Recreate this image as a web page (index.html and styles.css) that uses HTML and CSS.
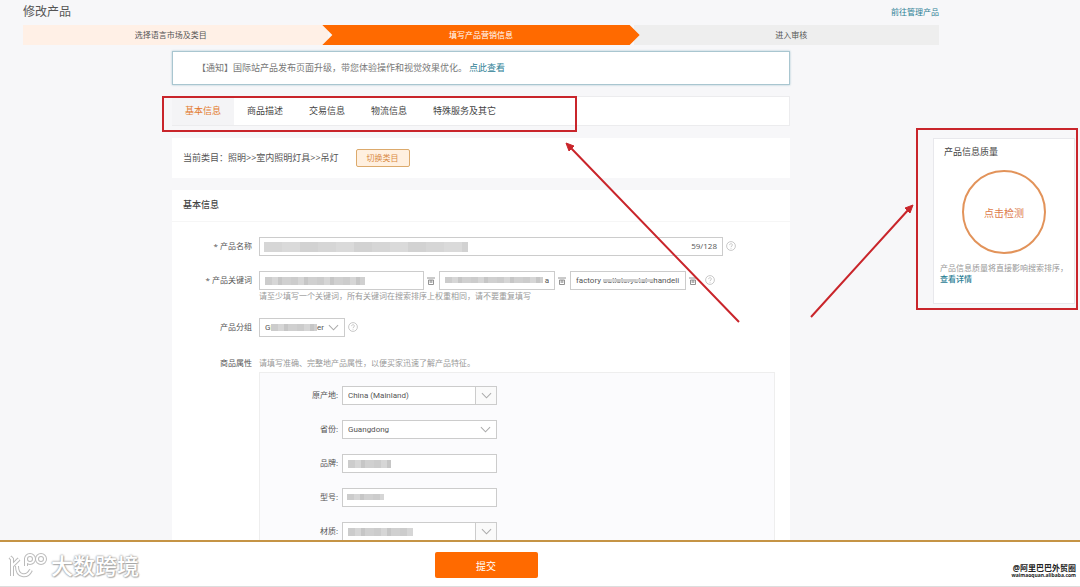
FILE: index.html
```html
<!DOCTYPE html>
<html lang="zh-CN">
<head>
  <meta charset="UTF-8">
  <meta name="viewport" content="width=device-width, initial-scale=1.0">
  <title>修改产品</title>
  <link rel="stylesheet" href="styles.css">
</head>
<body>
  <!-- Shared icons -->
  <svg class="icon-defs" aria-hidden="true">
    <symbol id="icon-help" viewBox="0 0 10 10">
      <circle cx="5" cy="5" r="4.4" fill="none" stroke="currentColor" stroke-width="0.8"/>
      <path d="M3.6 4.1c0-1.9 2.9-1.8 2.8-.1 0 1-1.4 1-1.4 2.1M5 6.9v.8" fill="none" stroke="currentColor" stroke-width="0.8"/>
    </symbol>
    <symbol id="icon-trash" viewBox="0 0 8 8">
      <path d="M0 1h8M1.5 3v4.5h5V3M1.5 3h5M3.2 3v3M4.8 3v3" fill="none" stroke="currentColor" stroke-width="0.9"/>
    </symbol>
    <symbol id="icon-down" viewBox="0 0 12 7">
      <path d="M1 1l5 5 5-5" fill="none" stroke="currentColor" stroke-width="1.1"/>
    </symbol>
  </svg>

  <div class="page">
    <header class="header">
      <div class="header-top">
        <h1>修改产品</h1>
        <a href="#">前往管理产品</a>
      </div>
      <ol class="steps">
        <li class="step done">选择语言市场及类目</li>
        <li class="step current">填写产品营销信息</li>
        <li class="step next">进入审核</li>
      </ol>
    </header>

    <div class="content">
      <main class="main">
        <div class="notice">【通知】国际站产品发布页面升级，带您体验操作和视觉效果优化。<a href="#">点此查看</a></div>

        <nav class="tabs">
          <a class="tab active" href="#">基本信息</a>
          <a class="tab" href="#">商品描述</a>
          <a class="tab" href="#">交易信息</a>
          <a class="tab" href="#">物流信息</a>
          <a class="tab" href="#">特殊服务及其它</a>
        </nav>

        <div class="category">
          <span>当前类目：照明&gt;&gt;室内照明灯具&gt;&gt;吊灯</span>
          <button type="button" class="switch-button">切换类目</button>
        </div>

        <form class="card" id="productForm">
          <h2>基本信息</h2>

          <div class="row">
            <label class="row-label" for="name"><b>*</b> 产品名称</label>
            <div class="field name-field">
              <input id="name" type="text">
              <span class="mask mask-name"></span>
              <span class="count">59/128</span>
            </div>
            <svg class="help"><use href="#icon-help"/></svg>
          </div>

          <div class="row">
            <label class="row-label" for="keyword1"><b>*</b> 产品关键词</label>
            <div class="row-body">
              <div class="keywords">
                <div class="field keyword-first">
                  <input id="keyword1" type="text">
                  <span class="mask mask-keyword1"></span>
                </div>
                <svg class="trash"><use href="#icon-trash"/></svg>
                <div class="field keyword">
                  <input class="align-right" type="text" value="a" aria-label="产品关键词 2">
                  <span class="mask mask-keyword2"></span>
                </div>
                <svg class="trash"><use href="#icon-trash"/></svg>
                <div class="field keyword">
                  <input type="text" value="factory outletcrystal chandeli" aria-label="产品关键词 3">
                  <span class="mask mask-keyword3"></span>
                </div>
                <svg class="trash"><use href="#icon-trash"/></svg>
                <svg class="help"><use href="#icon-help"/></svg>
              </div>
              <p class="hint">请至少填写一个关键词，所有关键词在搜索排序上权重相同，请不要重复填写</p>
            </div>
          </div>

          <div class="row row-group">
            <label class="row-label" for="group">产品分组</label>
            <div class="field group-field">
              <select id="group"><option>Glass chandelier</option></select>
              <span class="mask mask-group"></span>
              <span class="arrow"><svg><use href="#icon-down"/></svg></span>
            </div>
            <svg class="help"><use href="#icon-help"/></svg>
          </div>

          <div class="row row-attributes">
            <span class="row-label">商品属性</span>
            <div class="row-body">
              <p class="hint">请填写准确、完整地产品属性，以便买家迅速了解产品特征。</p>
              <div class="attributes">
                <div class="attribute">
                  <label for="origin">原产地:</label>
                  <div class="field">
                    <select id="origin"><option>China (Mainland)</option></select>
                    <span class="arrow boxed"><svg><use href="#icon-down"/></svg></span>
                  </div>
                </div>
                <div class="attribute">
                  <label for="province">省份:</label>
                  <div class="field">
                    <select id="province"><option>Guangdong</option></select>
                    <span class="arrow"><svg><use href="#icon-down"/></svg></span>
                  </div>
                </div>
                <div class="attribute">
                  <label for="brand">品牌:</label>
                  <div class="field">
                    <input id="brand" type="text">
                    <span class="mask mask-brand"></span>
                  </div>
                </div>
                <div class="attribute">
                  <label for="model">型号:</label>
                  <div class="field">
                    <input id="model" type="text">
                    <span class="mask mask-model"></span>
                  </div>
                </div>
                <div class="attribute">
                  <label for="material">材质:</label>
                  <div class="field">
                    <select id="material"><option></option></select>
                    <span class="mask mask-material"></span>
                    <span class="arrow boxed"><svg><use href="#icon-down"/></svg></span>
                  </div>
                </div>
              </div>
            </div>
          </div>
        </form>
      </main>

      <aside class="quality">
        <h3>产品信息质量</h3>
        <button type="button" class="check-button">点击检测</button>
        <p>产品信息质量将直接影响搜索排序，<a href="#">查看详情</a></p>
      </aside>
    </div>
  </div>

  <footer class="footer">
    <div class="brand">
      <svg class="brand-logo" viewBox="0 0 40 28">
        <g class="logo-shade">
          <path d="M2 6l2 2v17M4 15l7-7M9 15c0 11 10 12 14 4M18 7v8"/>
          <circle cx="22" cy="8" r="4"/>
          <circle cx="33" cy="8" r="4"/>
        </g>
        <g class="logo-line">
          <path d="M2 6l2 2v17M4 15l7-7M9 15c0 11 10 12 14 4M18 7v8"/>
          <circle cx="22" cy="8" r="4"/>
          <circle cx="33" cy="8" r="4"/>
        </g>
      </svg>
      <span>大数跨境</span>
    </div>
    <button type="submit" form="productForm" class="submit-button">提交</button>
    <div class="credit">
      <span>@阿里巴巴外贸圈</span>
      <small>waimaoquan.alibaba.com</small>
    </div>
  </footer>

  <!-- Callouts drawn over the page -->
  <svg class="callouts" viewBox="0 0 1080 587" aria-hidden="true">
    <rect x="163" y="97" width="413" height="34"/>
    <rect x="917" y="129" width="160" height="180"/>
    <path d="M739 322L570 147M811 317L909 209"/>
    <path class="head" d="M566 143l8 3-5 5zM913 205l-3 8-5-5z"/>
  </svg>
</body>
</html>
```

FILE: styles.css
```css
/* General Styles */
* {
  box-sizing: border-box;
}

body {
  font-family: "Open Sans", "Noto Sans CJK SC", sans-serif;
  font-size: 9px;
  line-height: 12px;
  color: #555;
  background-color: #f7f7f9;
  margin: 0;
  display: flex;
  flex-direction: column;
  height: 100vh;
  overflow: hidden;
}

h1, h2, h3, p, ol {
  margin: 0;
  padding: 0;
  font-weight: normal;
}

a {
  color: #2d8095;
  text-decoration: none;
}

button, input, select {
  font-family: inherit;
  color: inherit;
}

.icon-defs {
  position: absolute;
  width: 0;
  height: 0;
}

.page {
  flex: 1;
  min-height: 0;
  overflow: hidden;
}

/* Header */
.header {
  margin: 0 141px 0 23px;
}

.header-top {
  display: flex;
  justify-content: space-between;
  align-items: center;
  height: 25px;
  padding-bottom: 2px;
  font-size: 8px;
}

h1 {
  font-size: 12px;
}

.steps {
  display: grid;
  grid-template-columns: repeat(3, 1fr);
  list-style: none;
  height: 20px;
  font-size: 8px;
  line-height: 19px;
  text-align: center;
}

.step.done {
  background-color: #fff0e6;
  padding-right: 10px;
}

.step.current {
  background-color: #ff6a00;
  color: #fff;
  margin: 0 -6px;
  z-index: 1;
  clip-path: polygon(0 0, calc(100% - 10px) 0, 100% 50%, calc(100% - 10px) 100%, 0 100%, 10px 50%);
}

.step.next {
  background-color: #eee;
  padding-left: 10px;
}

/* Content */
.content {
  display: flex;
  align-items: flex-start;
  gap: 143px;
  padding: 6px 5px 0 172px;
}

.main {
  flex: 1;
}

.notice {
  height: 34px;
  padding: 0 24px;
  line-height: 32px;
  color: #777;
  background-color: #fff;
  border: 1px solid #a9c6d0;
  box-shadow: 0 0 2px #a9c6d0;
}

.notice a {
  margin-left: 2px;
}

.tabs {
  display: flex;
  margin-top: 11px;
  height: 30px;
  line-height: 28px;
  background-color: #fff;
  border: 1px solid #ececee;
  border-left: none;
}

.tab {
  padding: 0 13px;
  color: #444;
}

.tab.active {
  color: #e37a2c;
  background-color: #f4f4f6;
}

.category {
  display: flex;
  align-items: center;
  gap: 17px;
  margin-top: 12px;
  height: 40px;
  padding: 0 11px;
  background-color: #fff;
}

.switch-button {
  width: 54px;
  height: 18px;
  padding: 0;
  font-size: 8px;
  line-height: 14px;
  color: #d98a45;
  background-color: #fff0e0;
  border: 1px solid #dcaa6c;
  border-radius: 2px;
}

/* Form */
.card {
  margin-top: 12px;
  height: 400px;
  background-color: #fff;
}

h2 {
  height: 32px;
  padding: 0 11px;
  line-height: 30px;
  font-size: 9px;
  font-weight: 500;
  color: #444;
  border-bottom: 1px solid #f6f6f6;
}

.row {
  display: flex;
  align-items: flex-start;
  margin-top: 15px;
  padding-right: 15px;
  font-size: 8px;
}

.row-label {
  width: 80px;
  margin-right: 7px;
  line-height: 18px;
  text-align: right;
}

.row-label b {
  font-weight: normal;
}

.row-body {
  flex: 1;
}

.row .help {
  width: 10px;
  height: 10px;
  margin: 4px 0 0 3px;
  color: #bbb;
}

.field {
  position: relative;
  display: flex;
  height: 19px;
  background-color: #fff;
  border: 1px solid #ccc;
}

.field input,
.field select {
  flex: 1;
  min-width: 0;
  width: 0;
  height: 17px;
  padding: 0 5px;
  font-family: Roboto, "Noto Sans CJK SC", sans-serif;
  font-size: 8px;
  line-height: 16px;
  background: none;
  border: none;
  outline: none;
  appearance: none;
}

.field .align-right {
  text-align: right;
}

.name-field {
  flex: 1;
  max-width: 464px;
}

.count {
  padding-right: 5px;
  line-height: 16px;
}

.keywords {
  display: flex;
}

.keyword-first {
  width: 165px;
}

.keyword {
  width: 116px;
}

.trash {
  width: 8px;
  height: 8px;
  margin: 6px 4px 0 3px;
  color: #888;
}

.row .keywords .help {
  margin-left: 4px;
}

.hint {
  color: #999;
  font-size: 8px;
  line-height: 12px;
}

.row-group {
  margin-top: 16px;
}

.group-field {
  width: 86px;
}

.arrow {
  position: absolute;
  top: 0;
  right: 0;
  display: flex;
  align-items: center;
  justify-content: center;
  width: 21px;
  height: 17px;
  color: #aaa;
  pointer-events: none;
}

.arrow.boxed {
  background-color: #fafafa;
  border-left: 1px solid #ccc;
}

.arrow svg {
  width: 11px;
  height: 7px;
}

.row-attributes {
  margin-top: 17px;
}

.row-attributes .hint {
  line-height: 18px;
}

.attributes {
  display: flex;
  flex-direction: column;
  gap: 15px;
  height: 200px;
  padding-top: 13px;
  background-color: #fbfbfd;
  border: 1px solid #eee;
}

.attribute {
  display: flex;
}

.attribute label {
  width: 78px;
  margin-right: 4px;
  line-height: 18px;
  text-align: right;
}

.attribute .field {
  width: 155px;
}

/* Masked values */
.mask {
  position: absolute;
  top: 5px;
  left: 5px;
  height: 8px;
  background: repeating-linear-gradient(90deg, #ccc 0 7px, #d6d6d6 7px 13px, #c6c6c6 13px 17px, #d0d0d0 17px 26px);
}

.mask-name {
  top: 4px;
  left: 4px;
  width: 204px;
  height: 10px;
  background: repeating-linear-gradient(90deg, #d6d6d6 0 18px, #dadada 18px 36px, #d2d2d2 36px 54px);
}

.mask-keyword1 {
  width: 100px;
}

.mask-keyword2 {
  width: 98px;
  height: 6px;
}

.mask-keyword3 {
  top: 7px;
  left: 32px;
  width: 50px;
  height: 3px;
}

.mask-group {
  left: 11px;
  width: 46px;
  height: 7px;
}

.mask-brand {
  width: 43px;
}

.mask-model {
  left: 4px;
  width: 37px;
  height: 6px;
}

.mask-material {
  width: 65px;
}

/* Quality panel */
.quality {
  width: 142px;
  height: 166px;
  margin-top: 87px;
  padding: 7px 6px;
  background-color: #fff;
  border: 1px solid #e8e8ec;
}

.quality h3 {
  padding-left: 4px;
  font-size: 9px;
  color: #444;
}

.check-button {
  display: block;
  width: 84px;
  height: 84px;
  margin: 12px auto 8px;
  padding: 0;
  font-size: 10px;
  color: #dc7a4a;
  background: none;
  border: 2px solid #e2935a;
  border-radius: 50%;
}

.quality p {
  font-size: 8px;
  line-height: 11px;
  color: #999;
}

.quality p a {
  font-weight: 500;
  display: block;
}

/* Footer */
.footer {
  display: grid;
  grid-template-columns: 1fr 103px 1fr;
  align-items: center;
  height: 47px;
  padding: 2px 4px 0 8px;
  background-color: #fff;
  border-top: 2px solid #c59445;
  border-bottom: 1px solid #ddd;
}

.brand {
  display: flex;
  align-items: center;
  gap: 3px;
  font-size: 22px;
  line-height: 28px;
  font-weight: 500;
  color: #fff;
  text-shadow: 0 0 2px #999, 0 0 2px #aaa, 1px 1px 1px #bbb;
}

.brand-logo {
  width: 40px;
  height: 28px;
  fill: none;
}

.logo-shade {
  stroke: #bbb;
  stroke-width: 4;
}

.logo-line {
  stroke: #fff;
  stroke-width: 2;
}

.submit-button {
  height: 26px;
  margin-left: -56px;
  margin-right: 56px;
  padding: 0;
  font-size: 10px;
  color: #fff;
  background-color: #ff6a00;
  border: none;
  border-radius: 2px;
}

.credit {
  display: flex;
  flex-direction: column;
  align-items: flex-end;
  padding-top: 12px;
  font-size: 8px;
  line-height: 8px;
  font-weight: bold;
  color: #222;
}

.credit small {
  font-size: 5px;
  line-height: 6px;
}

/* Callouts */
.callouts {
  position: absolute;
  top: 0;
  left: 0;
  width: 1080px;
  height: 587px;
  pointer-events: none;
  fill: none;
  stroke: #c9252b;
  stroke-width: 2;
}

.callouts .head {
  fill: #c9252b;
  stroke-width: 1;
}
```
